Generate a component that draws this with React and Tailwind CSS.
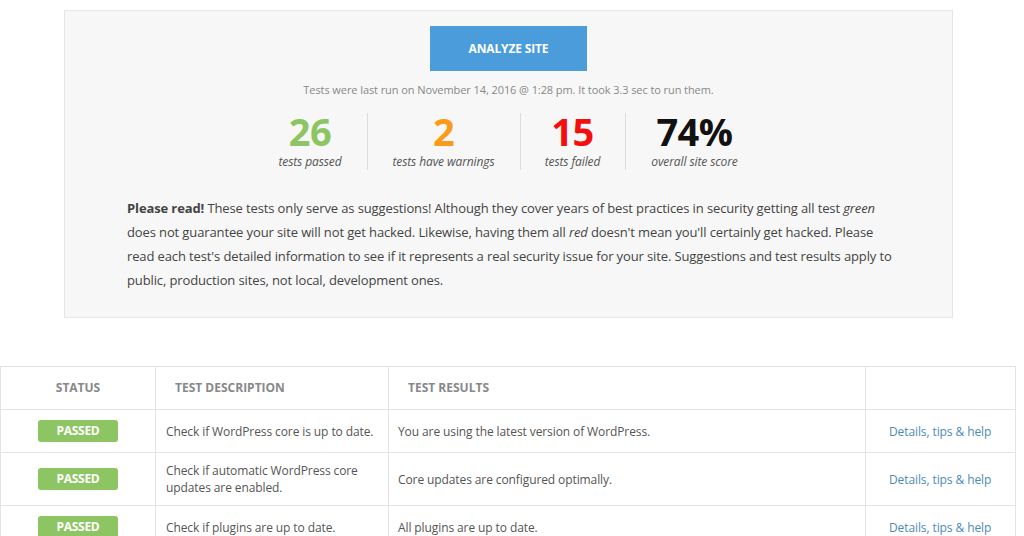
import React from "react";

const rows = [
  {
    desc: "Check if WordPress core is up to date.",
    result: "You are using the latest version of WordPress.",
    h: "h-[43px]",
  },
  {
    desc: "Check if automatic WordPress core updates are enabled.",
    result: "Core updates are configured optimally.",
    h: "h-[53px]",
  },
  {
    desc: "Check if plugins are up to date.",
    result: "All plugins are up to date.",
    h: "h-[43px]",
  },
];

const Stat = ({ value, label, color, width, last }) => (
  <div className={"flex flex-col items-center " + width + (last ? "" : " border-r border-[#dcdcdc]")}>
    <div className={"text-[38px] leading-[36px] font-bold tracking-[-0.5px] " + color}>{value}</div>
    <div className="text-[12px] leading-[16px] italic text-[#555] mt-[5px] tracking-[-0.1px]">{label}</div>
  </div>
);

const App = () => {
  return (
    <div
      className="bg-white w-[1024px] h-[536px] overflow-hidden pt-[10px]"
      style={{ fontFamily: '"Open Sans", "Liberation Sans", sans-serif' }}
    >
      <div className="ml-[64px] w-[889px] h-[308px] bg-[#f7f7f7] border border-[#e6e6e6] pt-[15px] flex flex-col items-center">
        <button className="w-[157px] h-[45px] bg-[#4a9cdb] text-white text-[12px] font-bold tracking-[-0.15px]">
          ANALYZE SITE
        </button>
        <p className="mt-[12px] text-[11px] leading-[14px] text-[#888] tracking-[-0.08px]">
          Tests were last run on November 14, 2016 @ 1:28 pm. It took 3.3 sec to run them.
        </p>
        <div className="flex mt-[16px] items-stretch">
          <Stat value="26" label="tests passed" color="text-[#8cc561]" width="w-[114px]" />
          <Stat value="2" label="tests have warnings" color="text-[#fa9b1a]" width="w-[153px]" />
          <Stat value="15" label="tests failed" color="text-[#f40f0f]" width="w-[105px]" />
          <Stat value="74%" label="overall site score" color="text-[#111]" width="w-[138px]" last />
        </div>
        <p className="self-start ml-[62px] mr-[52px] mt-[26px] text-[13px] leading-[24px] text-[#444] tracking-[-0.12px]">
          <b>Please read!</b> These tests only serve as suggestions! Although they cover years of best practices in
          security getting all test <i>green</i> does not guarantee your site will not get hacked. Likewise, having
          them all <i>red</i> doesn't mean you'll certainly get hacked. Please read each test's detailed information
          to see if it represents a real security issue for your site. Suggestions and test results apply to public,
          production sites, not local, development ones.
        </p>
      </div>

      <table className="mt-[48px] w-[1016px] border-collapse table-fixed">
        <thead>
          <tr className="h-[43px] text-[12px] font-bold text-[#888]">
            <th className="w-[155px] border border-[#e3e3e3] text-center font-bold">STATUS</th>
            <th className="w-[233px] border border-[#e3e3e3] text-left pl-[19px] font-bold">TEST DESCRIPTION</th>
            <th className="w-[477px] border border-[#e3e3e3] text-left pl-[19px] font-bold">TEST RESULTS</th>
            <th className="border border-[#e3e3e3]"></th>
          </tr>
        </thead>
        <tbody>
          {rows.map((r, i) => (
            <tr key={i} className={r.h + " text-[12px] leading-[17px] text-[#555] tracking-[-0.1px]"}>
              <td className="border border-[#e3e3e3] text-center">
                <span className="inline-block w-[80px] h-[22px] leading-[22px] rounded-[3px] bg-[#8cc561] text-white font-bold text-[12px] tracking-[-0.3px]">
                  PASSED
                </span>
              </td>
              <td className="border border-[#e3e3e3] pl-[10px] pr-[12px]">{r.desc}</td>
              <td className="border border-[#e3e3e3] pl-[9px]">{r.result}</td>
              <td className="border border-[#e3e3e3] pl-[23px] text-[#4b8bb8]">Details, tips &amp; help</td>
            </tr>
          ))}
        </tbody>
      </table>
    </div>
  );
};

export default App;
